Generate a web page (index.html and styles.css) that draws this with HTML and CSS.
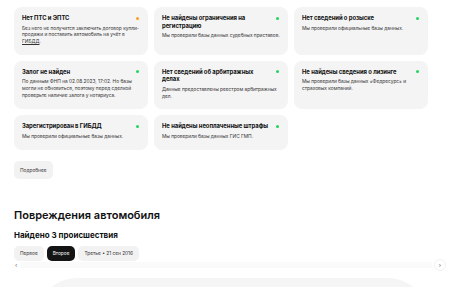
FILE: index.html
```html
<!DOCTYPE html>
<html lang="ru">
  <head>
    <meta charset="UTF-8" />
    <meta name="viewport" content="width=device-width, initial-scale=1.0" />
    <title>Отчёт</title>
    <link rel="stylesheet" href="styles.css">
  </head>
  <body>
    <div class="page">
      <div class="checks">
        <div class="check">
          <div class="check-head">
            <h4>Нет ПТС и ЭПТС</h4>
            <span class="dot dot-warn"></span>
          </div>
          <p>Без него не получится заключить договор купли-продажи и поставить автомобиль на учёт в <u>ГИБДД</u>.</p>
        </div>
        <div class="check">
          <div class="check-head">
            <h4>Не найдены ограничения на регистрацию</h4>
            <span class="dot"></span>
          </div>
          <p>Мы проверили базы данных судебных приставов.</p>
        </div>
        <div class="check">
          <div class="check-head">
            <h4>Нет сведений о розыске</h4>
            <span class="dot"></span>
          </div>
          <p>Мы проверили официальные базы данных.</p>
        </div>
        <div class="check">
          <div class="check-head">
            <h4>Залог не найден</h4>
            <span class="dot"></span>
          </div>
          <p>По данным ФНП на 02.08.2023, 17:02. Но базы могли не обновиться, поэтому перед сделкой проверьте наличие залога у нотариуса.</p>
        </div>
        <div class="check">
          <div class="check-head">
            <h4>Нет сведений об арбитражных делах</h4>
            <span class="dot"></span>
          </div>
          <p>Данные предоставлены реестром арбитражных дел.</p>
        </div>
        <div class="check">
          <div class="check-head">
            <h4>Не найдены сведения о лизинге</h4>
            <span class="dot"></span>
          </div>
          <p>Мы проверили базы данных «Федресурс» и страховых компаний.</p>
        </div>
        <div class="check">
          <div class="check-head">
            <h4>Зарегистрирован в ГИБДД</h4>
            <span class="dot"></span>
          </div>
          <p>Мы проверили официальные базы данных.</p>
        </div>
        <div class="check">
          <div class="check-head">
            <h4>Не найдены неоплаченные штрафы</h4>
            <span class="dot"></span>
          </div>
          <p>Мы проверили базы данных ГИС ГМП.</p>
        </div>
      </div>

      <button class="more-button">Подробнее</button>

      <h2 class="section-title">Повреждения автомобиля</h2>
      <h3 class="section-sub">Найдено 3 происшествия</h3>

      <div class="tabs">
        <button class="tab">Первое</button>
        <button class="tab tab-active">Второе</button>
        <button class="tab">Третье • 21 сен 2016</button>
      </div>

      <div class="scroller">
        <span class="arrow-left">‹</span>
        <div class="track"></div>
        <span class="arrow-right">›</span>
      </div>

      <div class="damage-card"></div>
    </div>
  </body>
</html>
```

FILE: styles.css
```css
body {
  font-family: "Inter", "Noto Sans", sans-serif;
  margin: 0;
  padding: 0;
  background-color: #fff;
  color: #111;
  overflow: hidden;
}

.page {
  padding: 7px 0 0 14px;
  width: 414px;
}

.checks {
  display: grid;
  grid-template-columns: repeat(3, 1fr);
  gap: 6px;
}

.check {
  background-color: #f4f4f4;
  border-radius: 8px;
  padding: 7px 8px 10px 8px;
}

.check-head {
  display: flex;
  justify-content: space-between;
  align-items: flex-start;
  gap: 6px;
}

.check h4 {
  margin: 0;
  font-size: 5.9px;
  line-height: 7.5px;
  font-weight: 700;
  letter-spacing: -0.05px;
}

.dot {
  flex: none;
  width: 3px;
  height: 3px;
  margin-top: 2.5px;
  margin-right: 1px;
  border-radius: 50%;
  background-color: #1fd65f;
}

.dot-warn {
  background-color: #f8a020;
}

.check p {
  margin: 3px 0 0;
  font-size: 4.8px;
  line-height: 6.8px;
  color: #333;
}

.more-button {
  display: block;
  margin-top: 11px;
  background-color: #f2f2f2;
  border: none;
  border-radius: 5px;
  padding: 0 6px;
  height: 18px;
  font-family: inherit;
  font-size: 4.8px;
  color: #333;
}

.section-title {
  margin: 27px 0 0;
  font-size: 11px;
  line-height: 18px;
  font-weight: 600;
}

.section-sub {
  margin: 6px 0 0;
  font-size: 8px;
  line-height: 10px;
  font-weight: 700;
}

.tabs {
  display: flex;
  gap: 3px;
  margin-top: 6px;
}

.tab {
  background-color: #f2f2f2;
  border: none;
  border-radius: 5px;
  height: 15px;
  padding: 0 6px;
  font-family: inherit;
  font-size: 4.8px;
  color: #333;
}

.tab-active {
  background-color: #141414;
  color: #fff;
}

.scroller {
  display: flex;
  align-items: center;
  height: 8px;
  margin-left: -14px;
  width: 446px;
}

.arrow-left {
  font-size: 6px;
  color: #666;
  margin-left: 15px;
  width: 5px;
}

.track {
  flex: 1;
  height: 6px;
  background-color: #fafafa;
}

.arrow-right {
  width: 10px;
  height: 10px;
  border-radius: 50%;
  border: 1px solid #f2f2f2;
  font-size: 6px;
  color: #666;
  text-align: center;
  line-height: 10px;
  margin-left: 2px;
}

.damage-card {
  margin: 9px 0 0 23px;
  height: 100px;
  background-color: #f5f5f5;
  border-radius: 40px;
}
```
